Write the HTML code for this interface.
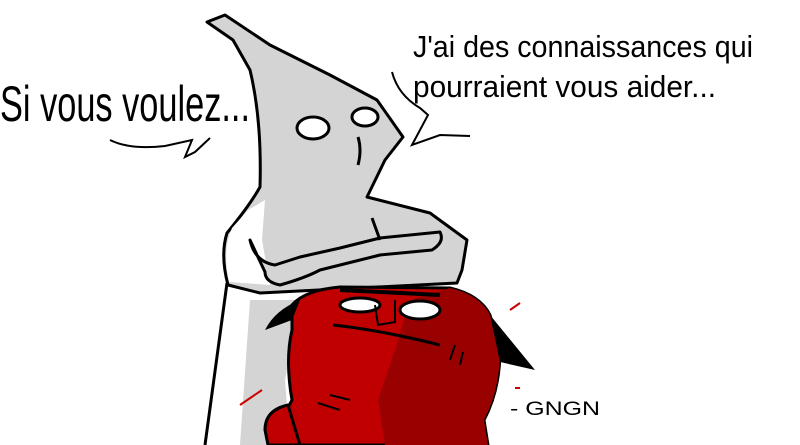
<!DOCTYPE html>
<html><head><meta charset="utf-8"><style>
html,body{margin:0;padding:0;background:#fff;}
svg{display:block}
text{font-family:"Liberation Sans",sans-serif;fill:#000}
</style></head><body>
<svg width="800" height="445" viewBox="0 0 800 445" xmlns="http://www.w3.org/2000/svg">
<rect width="800" height="445" fill="#fff"/>
<!-- lower ghost body shading -->
<path d="M250 300 L240 445 L290 445 L285 380 L300 300 Z" fill="#d4d4d4"/>
<!-- ghost -->
<path d="M207 22 L225 15 L270 45 L330 75 L377 100 L403 137 L385 160 L367 197 L430 213 L467 240 L462 270 L457 283 L260 293 L228 285 Q220 255 227 233 Q250 205 260 187 Q262 120 250 70 L233 40 Z" fill="#d4d4d4" stroke="#000" stroke-width="3" stroke-linejoin="round"/>
<path d="M229 282 Q222 250 232 228 L248 210 L265 200 L262 240 L270 285 Z" fill="#fff"/>
<path d="M227 283 L205 445" fill="none" stroke="#000" stroke-width="3"/>
<!-- arms -->
<path d="M250 240 Q255 262 275 265 L300 257 L340 248 L380 238 L440 232 Q445 242 432 250 L380 255 L320 270 Q305 278 280 285 Q265 282 265 272 Z" fill="#d4d4d4" stroke="#000" stroke-width="3" stroke-linejoin="round"/>
<path d="M372 218 L380 240" stroke="#000" stroke-width="3"/>
<!-- eyes -->
<ellipse cx="313" cy="128" rx="16" ry="11" fill="#fff" stroke="#000" stroke-width="3"/>
<ellipse cx="365" cy="117" rx="13" ry="9" fill="#fff" stroke="#000" stroke-width="3"/>
<path d="M358 137 Q362 150 358 165" fill="none" stroke="#000" stroke-width="3"/>
<!-- red creature -->
<path d="M292 305 Q305 290 340 287 L450 288 Q480 295 490 315 L500 350 Q500 390 484 420 L488 445 L290 445 Q280 420 292 400 Q285 360 292 330 Z" fill="#c00000" stroke="#000" stroke-width="3"/>
<path d="M410 300 L450 288 Q480 295 490 315 L500 350 Q500 390 484 420 L488 445 L385 445 L378 400 L395 350 Z" fill="#990000"/>
<path d="M288 405 Q265 410 265 430 L268 445 L300 445 Z" fill="#c00000" stroke="#000" stroke-width="3"/>
<path d="M300 300 Q275 310 265 330 L292 320 Z" fill="#000"/>
<path d="M490 315 L535 370 L500 362 Z" fill="#000"/>
<ellipse cx="360" cy="305" rx="20" ry="7" fill="#fff" stroke="#000" stroke-width="3"/>
<ellipse cx="420" cy="310" rx="20" ry="9" fill="#fff" stroke="#000" stroke-width="3"/>
<path d="M340 290 L440 295" stroke="#000" stroke-width="4"/>
<path d="M333 325 Q380 330 440 345" fill="none" stroke="#000" stroke-width="3"/>
<path d="M375 305 L378 325 L395 322 L395 300" fill="none" stroke="#000" stroke-width="2"/>
<path d="M330 395 L350 400 M318 403 L340 410 M450 360 L455 345 M460 365 L463 352" stroke="#000" stroke-width="2"/>
<!-- bubble tails -->
<path d="M110 140 Q130 150 165 146 L192 140 L185 157 L195 152 L210 138" fill="none" stroke="#000" stroke-width="2"/>
<path d="M392 72 Q398 95 420 108 L428 115 L412 145 L440 135 L470 136" fill="none" stroke="#000" stroke-width="2"/>
<path d="M510 310 L520 303 M240 405 L262 390 M515 388 L520 388" stroke="#c00" stroke-width="2"/>
<!-- text -->
<text x="0" y="121" font-size="50" textLength="250" lengthAdjust="spacingAndGlyphs">Si vous voulez...</text>
<text x="413" y="57" font-size="31" textLength="340" lengthAdjust="spacingAndGlyphs">J'ai des connaissances qui</text>
<text x="413" y="97" font-size="31" textLength="303" lengthAdjust="spacingAndGlyphs">pourraient vous aider...</text>
<text x="510" y="415" font-size="19" textLength="90" lengthAdjust="spacingAndGlyphs">- GNGN</text>
</svg>
</body></html>
